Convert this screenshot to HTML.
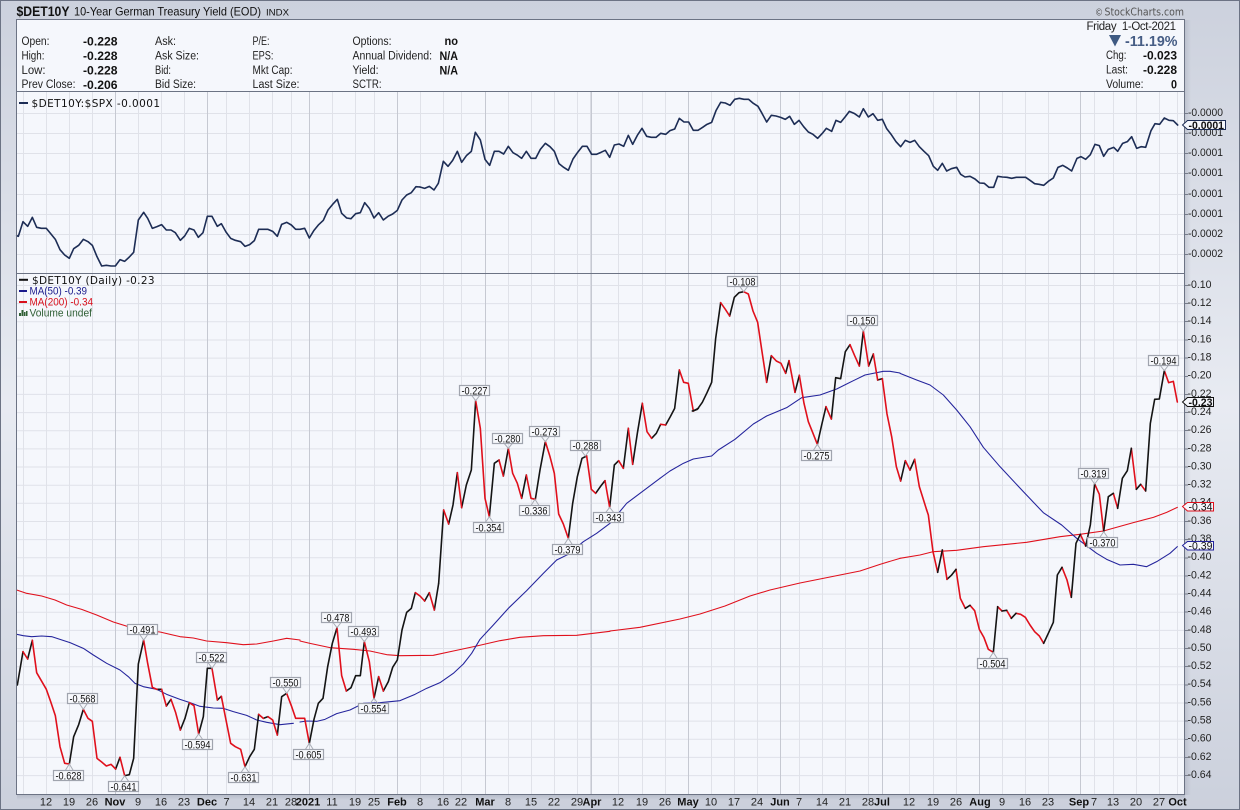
<!DOCTYPE html>
<html lang="en">
<head>
<meta charset="utf-8">
<title>$DET10Y Chart</title>
<style>
html,body{margin:0;padding:0;background:#d6dae4}
svg{display:block}
text{font-family:"Liberation Sans",Arial,sans-serif;fill:#111;white-space:pre}
.m{font-family:"DejaVu Sans",sans-serif}
.b{font-weight:bold}
.ln{fill:none;stroke-linejoin:round;stroke-linecap:round}
.k{stroke:#141414;stroke-width:4.8}
.r{stroke:#e0101c;stroke-width:4.8}
.n{stroke:#1d2d55;stroke-width:4.8}
.bl{stroke:#24249c;stroke-width:3.2}
.rm{stroke:#e0101c;stroke-width:3.2}
.ax text{font-size:11px;fill:#222}
.hd text{font-size:11.5px;fill:#222}
.hd .b{fill:#111;font-size:12px}
.dt text{font-size:11px;text-anchor:middle;fill:#222}
.dt .b{fill:#111;font-weight:bold}
.lb rect{fill:#f7f8fc;stroke:#a0a4ae;stroke-width:1.2}
.lb path{fill:none;stroke:#a8acb5;stroke-width:1}
.lb text{font-size:11px;fill:#111}
</style>
</head>
<body>
<svg xmlns="http://www.w3.org/2000/svg" width="1240" height="810" viewBox="0 0 1240 810">
<defs>
<linearGradient id="fr" x1="0" y1="0" x2="0" y2="1">
<stop offset="0" stop-color="#ccd1dd"/><stop offset=".5" stop-color="#e8ebf2"/><stop offset="1" stop-color="#cbd0dc"/>
</linearGradient>
<linearGradient id="sh" x1="0" y1="0" x2="1" y2="0">
<stop offset="0" stop-color="#8a90a0" stop-opacity=".28"/><stop offset="1" stop-color="#8a90a0" stop-opacity="0"/>
</linearGradient>
<linearGradient id="shb" x1="0" y1="0" x2="0" y2="1">
<stop offset="0" stop-color="#8a90a0" stop-opacity=".3"/><stop offset="1" stop-color="#8a90a0" stop-opacity="0"/>
</linearGradient>
</defs>

<rect x="0" y="0" width="1240" height="810" fill="url(#fr)"/>
<rect x="1185" y="20" width="6" height="775" fill="url(#sh)"/>
<rect x="17" y="795" width="1168" height="5" fill="url(#shb)"/>
<rect x=".5" y=".5" width="1239" height="809" fill="none" stroke="#6c7384"/>

<rect x="16.5" y="19.5" width="1168" height="775" fill="#f5f7fc"/>

<!-- grid -->
<path fill="none" stroke="#e0e2e9" d="M23.5 92V794M46.5 92V794M69.5 92V794M92.5 92V794M138.5 92V794M161.5 92V794M184.5 92V794M226.5 92V794M249.5 92V794M272.5 92V794M291.5 92V794M332.5 92V794M355.5 92V794M374.5 92V794M420.5 92V794M443.5 92V794M461.5 92V794M508.5 92V794M531.5 92V794M554.5 92V794M577.5 92V794M618.5 92V794M642.5 92V794M665.5 92V794M711.5 92V794M734.5 92V794M757.5 92V794M799.5 92V794M822.5 92V794M845.5 92V794M868.5 92V794M909.5 92V794M933.5 92V794M956.5 92V794M1002.5 92V794M1025.5 92V794M1048.5 92V794M1094.5 92V794M1113.5 92V794M1136.5 92V794M1159.5 92V794M1177.5 92V794"/>
<path fill="none" stroke="#e0e2e9" d="M17 113.5H1184M17 133.5H1184M17 153.5H1184M17 173.5H1184M17 194.5H1184M17 214.5H1184M17 234.5H1184M17 254.5H1184M17 285.5H1184M17 303.6H1184M17 321.8H1184M17 340H1184M17 358.1H1184M17 376.3H1184M17 394.4H1184M17 412.6H1184M17 430.7H1184M17 448.9H1184M17 467H1184M17 485.2H1184M17 503.3H1184M17 521.5H1184M17 539.6H1184M17 557.8H1184M17 575.9H1184M17 594.1H1184M17 612.2H1184M17 630.4H1184M17 648.5H1184M17 666.7H1184M17 684.8H1184M17 703H1184M17 721.1H1184M17 739.3H1184M17 757.4H1184M17 775.6H1184"/>
<path fill="none" stroke="#c6c9d2" d="M115.5 92V794M207.5 92V794M309.5 92V794M397.5 92V794M485.5 92V794M591.5 92V794M688.5 92V794M780.5 92V794M882.5 92V794M979.5 92V794M1080.5 92V794"/>
<path fill="none" stroke="#dadce4" d="M590.5 92V794"/>

<!-- MA lines -->
<g class="ln">
<path class="rm" transform="translate(0 560) scale(.33333)" d="M50 90 80 100 125 108 165 120 200 135 245 148 290 165 340 186 385 200 430 210 480 216 540 230 580 234 620 243 680 248 730 254 770 252 820 243 860 235 900 240"/>
<path class="rm" transform="translate(300 560) scale(.33333)" d="M0 243 30 250 90 263 160 268 210 273 260 284 300 287 400 286 460 273 530 258 600 242 660 232 730 227 830 226 930 214"/>
<path class="rm" transform="scale(.33333)" d="M1830 1893 1920 1882 2040 1857 2100 1842 2175 1818 2250 1788 2310 1770 2400 1749 2490 1731 2580 1713 2640 1693 2700 1675"/>
<path class="rm" transform="translate(900 340) scale(.33333)" d="M0 655 60 645 100 635 170 631 250 620 380 607 480 590 540 583 610 573 700 548 760 532 800 517 832 502"/>

<path class="bl" transform="translate(0 560) scale(.33333)" d="M50 223 70 227 95 230 125 228 155 230 180 238 210 248 250 265 280 285 320 310 360 330 385 350 405 370 430 380 470 388 500 403 540 418 570 428 600 439 640 444 670 445 700 455 740 466 770 480 800 487 840 494 880 490"/>
<path class="bl" transform="translate(300 560) scale(.33333)" d="M0 486 20 483 50 484 75 478 110 461 150 450 190 430 240 428 300 422 345 403 380 385 420 368 460 340 490 312 515 280 540 238 580 195 625 145 680 92 730 40 770 0"/>
<path class="bl" transform="translate(400 370) scale(.33333)" d="M470 570 505 553 550 515 590 490 630 460 680 400 720 370 760 340 780 325"/>
<path class="bl" transform="translate(660 270) scale(.33333)" d="M0 625 30 603 70 580 100 567 155 558 175 540 225 508 280 462 320 438 380 413 425 383 480 375 530 357 580 332 615 315 670 304 690 304 720 309"/>
<path class="bl" transform="translate(900 340) scale(.33333)" d="M0 100 50 120 90 135 130 165 170 210 210 260 250 322 300 380 370 455 430 518 485 555 530 595 590 640 620 658 660 675 700 673 740 680 770 665 810 640 832 620"/>
</g>

<!-- ratio line -->
<g class="ln n">
<path transform="translate(0 100) scale(.33333)" d="M50 407 55 409 69 365 83 379 97 352 110 382 124 385 139 385 152 401 166 418 180 449 194 465 208 475 221 446 236 436 250 418 264 425 277 436 291 470 305 498 319 496 333 498 346 498 360 479 374 484 388 471 401 457 415 360 431 337 443 355 457 385 471 380 485 374 499 390 513 390 526 398 541 421 554 408 568 385 582 390 595 412 609 398 622 349 636 349 652 379 664 371 678 396 692 415 706 421 722 425 735 439 749 434 763 422 776 388 790 388 804 388 818 394 832 409 845 373 860 367 874 375 887 388 900 388 914 385 928 414 942 391 956 374 970 361 984 330 998 313 1012 298 1025 340 1040 354 1053 356 1067 341 1081 338 1094 308 1108 325 1122 354 1136 338 1150 360 1164 349 1178 342 1192 331 1206 300 1220 285 1234 278 1248 260 1260 261"/>
<path transform="translate(420 90) scale(.33333)" d="M0 291 14 295 28 289 42 300 55 280 70 214 84 229 98 211 112 184 125 217 140 196 154 184 166 127 181 150 195 208 209 226 223 184 237 184 251 192 265 169 279 188 293 196 305 205 319 184 333 205 347 205 361 178 376 160 390 170 403 184 417 221 431 232 445 241 459 207 473 187 487 169 501 169 515 193 529 193 543 187 556 181 569 202 583 165 597 162 611 169 625 136 638 163 652 136 666 115 680 139 694 142 708 142 722 130 737 133 750 122 764 117 778 85 792 96 806 96 820 121 834 121 848 112 861 103 875 97 888 62 902 37 916 39 930 46 944 28 958 25 972 28 986 28 1000 40 1014 49 1026 70 1040 96 1054 76 1068 78 1082 82 1096 88 1109 79 1123 103 1137 91 1151 110 1165 126 1179 133 1193 145 1207 130 1219 115 1235 124"/>
<path transform="translate(830 90) scale(.33333)" d="M5 124 18 91 32 97 46 80 58 64 74 71 88 81 100 56 115 81 129 71 143 91 157 88 170 116 184 134 198 155 212 170 226 151 240 157 254 151 268 170 282 184 296 197 310 229 323 241 337 220 350 243 364 236 380 232 392 253 405 261 420 259 435 267 449 279 463 280 477 292 491 292 503 259 517 261 531 262 545 265 559 262 573 262 587 262 600 271 614 281 627 283 641 286 655 274 670 264 684 232 698 226 712 234 725 243 741 205 753 200 767 208 781 194 795 163 808 167 821 199 835 178 851 172 863 184 878 160 892 155 905 140 920 175 934 170 947 172 963 122 975 101 989 103 1003 84 1017 91 1030 92 1043 105"/>
</g>

<!-- price line -->
<g class="ln">
<g transform="translate(0 560) scale(.33333)">
<path class="k" d="M52 375 69 275M83 297 97 241M208 612 221 530 236 494 250 448M347 627 360 592M374 647 388 644 401 595 415 312 431 240M471 388 485 388M499 438 513 418M541 510 555 475 568 428M596 522 610 470 622 325 636 325M652 420 664 409M735 620 749 590 763 568 776 463M790 475 804 470M832 525 845 410 860 400"/>
<path class="r" d="M69 275 83 297M97 241 110 338 124 362 139 388 152 425 166 467 180 560 194 610 208 612M250 448 264 475 277 484 291 595 305 606 319 618 333 613 347 627M360 592 374 647M431 240 443 310 457 382 471 388M485 388 499 438M513 418 527 458 541 510M568 428 582 437 596 522M636 325 652 420M664 409 678 480 692 550 706 560 722 568 735 620M776 463 790 475M804 470 818 480 832 525M860 400 874 437 887 475 900 475 914 475 928 550"/>
</g>
<g transform="translate(300 560) scale(.33333)">
<path class="k" d="M28 550 42 478 55 430 69 415 83 320 97 250 111 203M139 393 153 383 167 347 181 347 193 245M222 415 236 350M250 393 265 365 278 322 292 300 306 210 320 157 334 145 346 98M374 123 388 98M403 150 416 70"/>
<path class="r" d="M111 203 125 347 139 393M193 245 208 305 222 415M236 350 250 393M346 98 360 108 374 123M388 98 403 150"/>
</g>
<g transform="translate(400 370) scale(.33333)">
<path class="k" d="M116 640 131 420M146 462 159 405 172 308M185 413 199 345 214 300 227 92M268 440 283 280 297 270M310 318 325 235M365 385 379 315M406 388 420 300 436 215M505 505 518 400 532 320 546 265 560 258M587 370 601 350 615 332M629 412 643 285 656 272M670 295 685 175M698 283 712 190 727 100M755 205 769 190 782 163M797 165 811 140 824 115 838 0M880 123 895 115"/>
<path class="r" d="M131 420 146 462M172 308 185 413M227 92 241 175 255 385 268 440M297 270 310 318M325 235 338 310 352 340 365 385M379 315 393 385 406 388M436 215 450 260 463 310 476 432 490 462 505 505M560 258 574 358 587 370M615 332 629 412M656 272 670 295M685 175 698 283M727 100 741 185 755 205M782 163 797 165M838 0 851 37 865 40 880 123"/>
</g>
<g transform="translate(660 270) scale(.33333)">
<path class="k" d="M97 423 112 418 127 397 141 368 155 337 167 205 182 98M209 138 223 82 237 68 251 65M320 337 334 257M377 310 387 272M405 367 418 316M472 523 485 465 498 410M514 447 527 323 542 326 556 245 570 224M598 288 610 183M626 288 640 252M653 330 667 326M722 633 736 572M750 600 764 568"/>
<path class="r" d="M182 98 196 118 209 138M251 65 265 72 279 123 293 157 306 245 320 337M334 257 349 273 363 280 377 310M387 272 405 367M418 316 432 400 445 455 459 490 472 523M498 410 514 447M570 224 584 257 598 288M610 183 626 288M640 252 653 330M667 326 681 432 695 500 709 590 722 633M736 572 750 600M764 568 778 650 800 720"/>
</g>
<g transform="translate(900 560) scale(.33333)">
<path class="r" d="M168 28 181 115 196 145M210 136 224 152 238 208 252 233 265 268 280 277M293 140 306 153M320 151 334 175M348 160 362 163 376 172 390 195 404 215 418 228 431 250M486 22 501 60 514 112"/>
<path class="k" d="M141 58 154 46 168 28M196 145 210 136M280 277 293 140M306 153 320 151M334 175 348 160M431 250 445 220 460 187 472 45 486 22"/>
</g>
<g transform="translate(900 340) scale(.33333)">
<path class="r" d="M80 510 85 525 99 635 113 697M127 630 141 718M541 583 557 618M584 432 598 463 611 575M640 460 653 505M694 325 709 448M722 433 737 453M793 92 806 128 820 124 832 186"/>
<path class="k" d="M113 697 127 630M514 772 528 610 541 583M557 618 571 555 584 432M611 575 625 470 640 460M653 505 667 415 682 392 694 325M709 448 722 433M737 453 751 250 764 178 778 177 793 92"/>
</g>
</g>

<!-- labels -->
<g class="lb">
<g transform="translate(742.5 281.5)"><path d="M-2.8 5 1.2 10.2 5.2 5"/><rect x="-15" y="-5" width="30" height="10"/><text x="-13" y="3.9" textLength="26" lengthAdjust="spacingAndGlyphs">-0.108</text></g>
<g transform="translate(862.5 320.5)"><path d="M-3.2 5 .8 10.5 4.8 5"/><rect x="-15" y="-5" width="30" height="10"/><text x="-13" y="3.9" textLength="26" lengthAdjust="spacingAndGlyphs">-0.150</text></g>
<g transform="translate(816.5 455.5)"><path d="M-3.2 -5 .8 -11.2 4.8 -5"/><rect x="-15" y="-5" width="30" height="10"/><text x="-13" y="3.9" textLength="26" lengthAdjust="spacingAndGlyphs">-0.275</text></g>
<g transform="translate(474.5 390.5)"><path d="M-2.8 5 1.2 10.2 5.2 5"/><rect x="-15" y="-5" width="30" height="10"/><text x="-13" y="3.9" textLength="26" lengthAdjust="spacingAndGlyphs">-0.227</text></g>
<g transform="translate(507.5 438.5)"><path d="M-3.2 5 .8 9.8 4.8 5"/><rect x="-15" y="-5" width="30" height="10"/><text x="-13" y="3.9" textLength="26" lengthAdjust="spacingAndGlyphs">-0.280</text></g>
<g transform="translate(544.5 431.5)"><path d="M-3.2 5 .8 10.2 4.8 5"/><rect x="-15" y="-5" width="30" height="10"/><text x="-13" y="3.9" textLength="26" lengthAdjust="spacingAndGlyphs">-0.273</text></g>
<g transform="translate(585.5 445.5)"><path d="M-4.2 5 -.2 10.5 3.8 5"/><rect x="-15" y="-5" width="30" height="10"/><text x="-13" y="3.9" textLength="26" lengthAdjust="spacingAndGlyphs">-0.288</text></g>
<g transform="translate(488.5 527.5)"><path d="M-3.2 -5 .8 -10.8 4.8 -5"/><rect x="-15" y="-5" width="30" height="10"/><text x="-13" y="3.9" textLength="26" lengthAdjust="spacingAndGlyphs">-0.354</text></g>
<g transform="translate(534.5 510.5)"><path d="M-3.5 -5 .5 -11.2 4.5 -5"/><rect x="-15" y="-5" width="30" height="10"/><text x="-13" y="3.9" textLength="26" lengthAdjust="spacingAndGlyphs">-0.336</text></g>
<g transform="translate(567.5 549.5)"><path d="M-3.2 -5 .8 -11.2 4.8 -5"/><rect x="-15" y="-5" width="30" height="10"/><text x="-13" y="3.9" textLength="26" lengthAdjust="spacingAndGlyphs">-0.379</text></g>
<g transform="translate(608.5 517.5)"><path d="M-2.8 -5 1.2 -10.2 5.2 -5"/><rect x="-15" y="-5" width="30" height="10"/><text x="-13" y="3.9" textLength="26" lengthAdjust="spacingAndGlyphs">-0.343</text></g>
<g transform="translate(1163.5 360.5)"><path d="M-3.2 5 .8 10.2 4.8 5"/><rect x="-15" y="-5" width="30" height="10"/><text x="-13" y="3.9" textLength="26" lengthAdjust="spacingAndGlyphs">-0.194</text></g>
<g transform="translate(1093.5 473.5)"><path d="M-2.8 5 1.2 10.5 5.2 5"/><rect x="-15" y="-5" width="30" height="10"/><text x="-13" y="3.9" textLength="26" lengthAdjust="spacingAndGlyphs">-0.319</text></g>
<g transform="translate(1102.5 542.5)"><path d="M-2.8 -5 1.2 -10.8 5.2 -5"/><rect x="-15" y="-5" width="30" height="10"/><text x="-13" y="3.9" textLength="26" lengthAdjust="spacingAndGlyphs">-0.370</text></g>
<g transform="translate(992.5 663.5)"><path d="M-3.2 -5 .8 -11.2 4.8 -5"/><rect x="-15" y="-5" width="30" height="10"/><text x="-13" y="3.9" textLength="26" lengthAdjust="spacingAndGlyphs">-0.504</text></g>
<g transform="translate(142.5 629.5)"><path d="M-2.8 5 1.2 10.5 5.2 5"/><rect x="-15" y="-5" width="30" height="10"/><text x="-13" y="3.9" textLength="26" lengthAdjust="spacingAndGlyphs">-0.491</text></g>
<g transform="translate(82.5 698.5)"><path d="M-3.2 5 .8 10.8 4.8 5"/><rect x="-15" y="-5" width="30" height="10"/><text x="-13" y="3.9" textLength="26" lengthAdjust="spacingAndGlyphs">-0.568</text></g>
<g transform="translate(211.5 657.5)"><path d="M-3.5 5 .5 10.8 4.5 5"/><rect x="-15" y="-5" width="30" height="10"/><text x="-13" y="3.9" textLength="26" lengthAdjust="spacingAndGlyphs">-0.522</text></g>
<g transform="translate(285.5 682.5)"><path d="M-2.8 5 1.2 10.8 5.2 5"/><rect x="-15" y="-5" width="30" height="10"/><text x="-13" y="3.9" textLength="26" lengthAdjust="spacingAndGlyphs">-0.550</text></g>
<g transform="translate(68.5 775.5)"><path d="M-3.2 -5 .8 -11.5 4.8 -5"/><rect x="-15" y="-5" width="30" height="10"/><text x="-13" y="3.9" textLength="26" lengthAdjust="spacingAndGlyphs">-0.628</text></g>
<g transform="translate(123.5 786.5)"><path d="M-2.8 -5 1.2 -10.8 5.2 -5"/><rect x="-15" y="-5" width="30" height="10"/><text x="-13" y="3.9" textLength="26" lengthAdjust="spacingAndGlyphs">-0.641</text></g>
<g transform="translate(197.5 744.5)"><path d="M-2.8 -5 1.2 -10.5 5.2 -5"/><rect x="-15" y="-5" width="30" height="10"/><text x="-13" y="3.9" textLength="26" lengthAdjust="spacingAndGlyphs">-0.594</text></g>
<g transform="translate(243.5 777.5)"><path d="M-2.5 -5 1.5 -10.8 5.5 -5"/><rect x="-15" y="-5" width="30" height="10"/><text x="-13" y="3.9" textLength="26" lengthAdjust="spacingAndGlyphs">-0.631</text></g>
<g transform="translate(308.5 754.5)"><path d="M-3.2 -5 .8 -11.2 4.8 -5"/><rect x="-15" y="-5" width="30" height="10"/><text x="-13" y="3.9" textLength="26" lengthAdjust="spacingAndGlyphs">-0.605</text></g>
<g transform="translate(336.5 617.5)"><path d="M-3.5 5 .5 10.2 4.5 5"/><rect x="-15" y="-5" width="30" height="10"/><text x="-13" y="3.9" textLength="26" lengthAdjust="spacingAndGlyphs">-0.478</text></g>
<g transform="translate(363.5 631.5)"><path d="M-3.2 5 .8 10.2 4.8 5"/><rect x="-15" y="-5" width="30" height="10"/><text x="-13" y="3.9" textLength="26" lengthAdjust="spacingAndGlyphs">-0.493</text></g>
<g transform="translate(373.5 708.5)"><path d="M-3.5 -5 .5 -10.2 4.5 -5"/><rect x="-15" y="-5" width="30" height="10"/><text x="-13" y="3.9" textLength="26" lengthAdjust="spacingAndGlyphs">-0.554</text></g>
</g>

<!-- header box -->
<rect x="16.5" y="19.5" width="1168" height="72" fill="#f5f7fc"/>
<path fill="none" stroke="#6c7384" d="M16.5 19.5H1184.5V794.5H16.5ZM17 91.5H1184M17 273.5H1184"/>

<!-- axis ticks -->
<path fill="none" stroke="#777d8c" d="M1185 113.5h3M1185 133.5h3M1185 153.5h3M1185 173.5h3M1185 194.5h3M1185 214.5h3M1185 234.5h3M1185 254.5h3M1185 285.5h3M1185 303.5h3M1185 321.5h3M1185 340h3M1185 358h3M1185 376.5h3M1185 394.5h3M1185 412.5h3M1185 430.5h3M1185 449h3M1185 467h3M1185 485h3M1185 503.5h3M1185 521.5h3M1185 539.5h3M1185 558h3M1185 576h3M1185 594h3M1185 612h3M1185 630.5h3M1185 648.5h3M1185 666.5h3M1185 685h3M1185 703h3M1185 721h3M1185 739.5h3M1185 757.5h3M1185 775.5h3"/>

<!-- top title -->
<text class="b" x="16.5" y="16" font-size="14" textLength="53" lengthAdjust="spacingAndGlyphs">$DET10Y</text>
<text x="74" y="15.5" font-size="12" fill="#222" textLength="187" lengthAdjust="spacingAndGlyphs">10-Year German Treasury Yield (EOD)</text>
<text x="266" y="15.5" font-size="9.5" textLength="23" lengthAdjust="spacingAndGlyphs">INDX</text>
<text class="m" x="1095" y="15.5" font-size="10" style="fill:#555" textLength="8" lengthAdjust="spacingAndGlyphs">©</text>
<text class="m" x="1104.5" y="15.5" font-size="10.5" style="fill:#555" textLength="79.5" lengthAdjust="spacingAndGlyphs">StockCharts.com</text>

<!-- quote table -->
<g class="hd">
<text x="21.5" y="45" textLength="28" lengthAdjust="spacingAndGlyphs">Open:</text>
<text x="21.5" y="59.5" textLength="23" lengthAdjust="spacingAndGlyphs">High:</text>
<text x="21.5" y="74" textLength="24" lengthAdjust="spacingAndGlyphs">Low:</text>
<text x="21.5" y="88" textLength="54" lengthAdjust="spacingAndGlyphs">Prev Close:</text>
<text class="b" x="83" y="45.5" textLength="34.5" lengthAdjust="spacingAndGlyphs">-0.228</text>
<text class="b" x="83" y="60" textLength="34.5" lengthAdjust="spacingAndGlyphs">-0.228</text>
<text class="b" x="83" y="74.5" textLength="34.5" lengthAdjust="spacingAndGlyphs">-0.228</text>
<text class="b" x="83" y="89" textLength="34.5" lengthAdjust="spacingAndGlyphs">-0.206</text>
<text x="155" y="45" textLength="21" lengthAdjust="spacingAndGlyphs">Ask:</text>
<text x="155" y="59.5" textLength="44" lengthAdjust="spacingAndGlyphs">Ask Size:</text>
<text x="155" y="74" textLength="16" lengthAdjust="spacingAndGlyphs">Bid:</text>
<text x="155" y="88" textLength="41" lengthAdjust="spacingAndGlyphs">Bid Size:</text>
<text x="252.5" y="45" textLength="17" lengthAdjust="spacingAndGlyphs">P/E:</text>
<text x="252.5" y="59.5" textLength="21" lengthAdjust="spacingAndGlyphs">EPS:</text>
<text x="252.5" y="74" textLength="40" lengthAdjust="spacingAndGlyphs">Mkt Cap:</text>
<text x="252.5" y="88" textLength="47" lengthAdjust="spacingAndGlyphs">Last Size:</text>
<text x="352.5" y="45" textLength="39" lengthAdjust="spacingAndGlyphs">Options:</text>
<text x="352.5" y="59.5" textLength="79.5" lengthAdjust="spacingAndGlyphs">Annual Dividend:</text>
<text x="352.5" y="74" textLength="26" lengthAdjust="spacingAndGlyphs">Yield:</text>
<text x="352.5" y="88" textLength="29" lengthAdjust="spacingAndGlyphs">SCTR:</text>
<text class="b" x="444.5" y="45" textLength="13.5" lengthAdjust="spacingAndGlyphs">no</text>
<text class="b" x="439.5" y="60" textLength="18.5" lengthAdjust="spacingAndGlyphs">N/A</text>
<text class="b" x="439.5" y="74.5" textLength="18.5" lengthAdjust="spacingAndGlyphs">N/A</text>
<text x="1086.5" y="30" textLength="89.5" lengthAdjust="spacing">Friday  1-Oct-2021</text>
<text x="1106" y="59" textLength="20.5" lengthAdjust="spacingAndGlyphs">Chg:</text>
<text x="1106" y="73.5" textLength="22" lengthAdjust="spacingAndGlyphs">Last:</text>
<text x="1106" y="88" textLength="37.5" lengthAdjust="spacingAndGlyphs">Volume:</text>
<text class="b" x="1143" y="59.5" textLength="34" lengthAdjust="spacingAndGlyphs">-0.023</text>
<text class="b" x="1143" y="74" textLength="34" lengthAdjust="spacingAndGlyphs">-0.228</text>
<text class="b" x="1171" y="88.5" textLength="6" lengthAdjust="spacingAndGlyphs">0</text>
</g>
<path d="M1109 35H1121L1115 46.5Z" fill="#3f5a82"/>
<text class="b" x="1125" y="46" font-size="15" style="fill:#465d85" textLength="52.5" lengthAdjust="spacingAndGlyphs">-11.19%</text>

<!-- legends -->
<rect x="19" y="102" width="9" height="2" fill="#1d2d55"/>
<text class="m" x="31.5" y="107" font-size="10.5" textLength="128.5" lengthAdjust="spacing">$DET10Y:$SPX -0.0001</text>
<rect x="19" y="278.8" width="9" height="2" fill="#111"/>
<text class="m" x="32" y="284" font-size="10.5" textLength="122.5" lengthAdjust="spacing">$DET10Y (Daily) -0.23</text>
<rect x="19" y="290" width="8" height="2" fill="#1a1a8c"/>
<text x="29.5" y="294.5" font-size="11" style="fill:#1a1a8c" textLength="57.5" lengthAdjust="spacingAndGlyphs">MA(50) -0.39</text>
<rect x="19" y="301" width="8" height="2" fill="#d8101c"/>
<text x="29.5" y="305.5" font-size="11" style="fill:#d8101c" textLength="63.5" lengthAdjust="spacingAndGlyphs">MA(200) -0.34</text>
<path d="M19 316v-3h2v3zM21.5 316v-6h2v6zM24 316v-4h1.5v4zM26 316v-5h1.5v5z" fill="#2f5f35"/>
<text x="29.5" y="316.5" font-size="11" style="fill:#2f5f35" textLength="62.5" lengthAdjust="spacingAndGlyphs">Volume undef</text>

<!-- right axis -->
<g class="ax">
<text x="1188" y="116" textLength="35" lengthAdjust="spacingAndGlyphs">-0.0000</text>
<text x="1188" y="136" textLength="35" lengthAdjust="spacingAndGlyphs">-0.0001</text>
<text x="1188" y="156" textLength="35" lengthAdjust="spacingAndGlyphs">-0.0001</text>
<text x="1188" y="176" textLength="35" lengthAdjust="spacingAndGlyphs">-0.0001</text>
<text x="1188" y="197" textLength="35" lengthAdjust="spacingAndGlyphs">-0.0001</text>
<text x="1188" y="217" textLength="35" lengthAdjust="spacingAndGlyphs">-0.0001</text>
<text x="1188" y="237" textLength="35" lengthAdjust="spacingAndGlyphs">-0.0002</text>
<text x="1188" y="257" textLength="35" lengthAdjust="spacingAndGlyphs">-0.0002</text>
<text x="1187.5" y="288" textLength="24" lengthAdjust="spacingAndGlyphs">-0.10</text>
<text x="1187.5" y="306" textLength="24" lengthAdjust="spacingAndGlyphs">-0.12</text>
<text x="1187.5" y="324.2" textLength="24" lengthAdjust="spacingAndGlyphs">-0.14</text>
<text x="1187.5" y="342.4" textLength="24" lengthAdjust="spacingAndGlyphs">-0.16</text>
<text x="1187.5" y="360.5" textLength="24" lengthAdjust="spacingAndGlyphs">-0.18</text>
<text x="1187.5" y="378.7" textLength="24" lengthAdjust="spacingAndGlyphs">-0.20</text>
<text x="1187.5" y="396.8" textLength="24" lengthAdjust="spacingAndGlyphs">-0.22</text>
<text x="1187.5" y="415" textLength="24" lengthAdjust="spacingAndGlyphs">-0.24</text>
<text x="1187.5" y="433.1" textLength="24" lengthAdjust="spacingAndGlyphs">-0.26</text>
<text x="1187.5" y="451.3" textLength="24" lengthAdjust="spacingAndGlyphs">-0.28</text>
<text x="1187.5" y="469.4" textLength="24" lengthAdjust="spacingAndGlyphs">-0.30</text>
<text x="1187.5" y="487.6" textLength="24" lengthAdjust="spacingAndGlyphs">-0.32</text>
<text x="1187.5" y="505.7" textLength="24" lengthAdjust="spacingAndGlyphs">-0.34</text>
<text x="1187.5" y="523.9" textLength="24" lengthAdjust="spacingAndGlyphs">-0.36</text>
<text x="1187.5" y="542" textLength="24" lengthAdjust="spacingAndGlyphs">-0.38</text>
<text x="1187.5" y="560.2" textLength="24" lengthAdjust="spacingAndGlyphs">-0.40</text>
<text x="1187.5" y="578.3" textLength="24" lengthAdjust="spacingAndGlyphs">-0.42</text>
<text x="1187.5" y="596.5" textLength="24" lengthAdjust="spacingAndGlyphs">-0.44</text>
<text x="1187.5" y="614.6" textLength="24" lengthAdjust="spacingAndGlyphs">-0.46</text>
<text x="1187.5" y="632.8" textLength="24" lengthAdjust="spacingAndGlyphs">-0.48</text>
<text x="1187.5" y="650.9" textLength="24" lengthAdjust="spacingAndGlyphs">-0.50</text>
<text x="1187.5" y="669.1" textLength="24" lengthAdjust="spacingAndGlyphs">-0.52</text>
<text x="1187.5" y="687.2" textLength="24" lengthAdjust="spacingAndGlyphs">-0.54</text>
<text x="1187.5" y="705.4" textLength="24" lengthAdjust="spacingAndGlyphs">-0.56</text>
<text x="1187.5" y="723.5" textLength="24" lengthAdjust="spacingAndGlyphs">-0.58</text>
<text x="1187.5" y="741.7" textLength="24" lengthAdjust="spacingAndGlyphs">-0.60</text>
<text x="1187.5" y="759.8" textLength="24" lengthAdjust="spacingAndGlyphs">-0.62</text>
<text x="1187.5" y="778" textLength="24" lengthAdjust="spacingAndGlyphs">-0.64</text>
</g>

<!-- price tags -->
<path d="M1182.5 125 1187.5 120.5H1225.5V129.5H1187.5Z" fill="#f5f7fc" stroke="#1d2d55"/>
<text class="b" x="1188.5" y="129" font-size="11" textLength="35.5" lengthAdjust="spacingAndGlyphs">-0.0001</text>
<path d="M1182.5 402 1187.5 397.5H1213.5V406.5H1187.5Z" fill="#f5f7fc" stroke="#111"/>
<text class="b" x="1188.5" y="406" font-size="11" textLength="24" lengthAdjust="spacingAndGlyphs">-0.23</text>
<path d="M1182.5 506.5 1187.5 502.5H1213.5V511H1187.5Z" fill="#f5f7fc" stroke="#e0101c"/>
<text x="1188.5" y="510.5" font-size="11" textLength="24" lengthAdjust="spacingAndGlyphs">-0.34</text>
<path d="M1182.5 545.5 1187.5 541.5H1213.5V550H1187.5Z" fill="#f5f7fc" stroke="#24249c"/>
<text x="1188.5" y="549.5" font-size="11" textLength="24" lengthAdjust="spacingAndGlyphs">-0.39</text>

<!-- date axis -->
<g class="dt">
<text x="46" y="805.5">12</text><text x="69" y="805.5">19</text><text x="92" y="805.5">26</text>
<text class="b" x="115" y="805.5">Nov</text><text x="138" y="805.5">9</text><text x="161" y="805.5">16</text><text x="184" y="805.5">23</text>
<text class="b" x="207" y="805.5">Dec</text><text x="226.5" y="805.5">7</text><text x="249" y="805.5">14</text><text x="272" y="805.5">21</text><text x="291" y="805.5">28</text>
<text class="b" x="308" y="805.5">2021</text><text x="332" y="805.5">11</text><text x="355" y="805.5">19</text><text x="374" y="805.5">25</text>
<text class="b" x="397" y="805.5">Feb</text><text x="420" y="805.5">8</text><text x="443" y="805.5">16</text><text x="461" y="805.5">22</text>
<text class="b" x="485" y="805.5">Mar</text><text x="508" y="805.5">8</text><text x="531" y="805.5">15</text><text x="554" y="805.5">22</text><text x="577" y="805.5">29</text>
<text class="b" x="592" y="805.5">Apr</text><text x="618" y="805.5">12</text><text x="642" y="805.5">19</text><text x="665" y="805.5">26</text>
<text class="b" x="688" y="805.5">May</text><text x="711" y="805.5">10</text><text x="734" y="805.5">17</text><text x="757" y="805.5">24</text>
<text class="b" x="780" y="805.5">Jun</text><text x="799" y="805.5">7</text><text x="822" y="805.5">14</text><text x="845" y="805.5">21</text><text x="868" y="805.5">28</text>
<text class="b" x="882" y="805.5">Jul</text><text x="909" y="805.5">12</text><text x="933" y="805.5">19</text><text x="956" y="805.5">26</text>
<text class="b" x="980" y="805.5">Aug</text><text x="1002" y="805.5">9</text><text x="1025" y="805.5">16</text><text x="1048" y="805.5">23</text>
<text class="b" x="1079" y="805.5">Sep</text><text x="1094" y="805.5">7</text><text x="1113" y="805.5">13</text><text x="1136" y="805.5">20</text><text x="1159" y="805.5">27</text>
<text class="b" x="1177.5" y="805.5">Oct</text>
</g>
</svg>
</body>
</html>
